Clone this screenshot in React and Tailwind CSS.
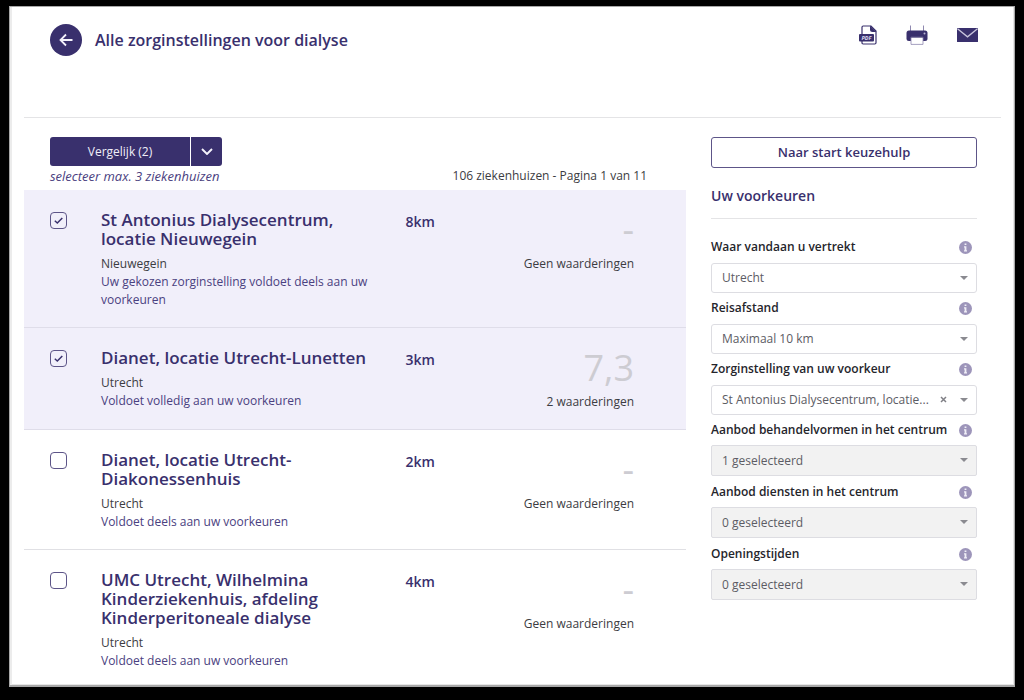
const institutions = [
  { name: 'St Antonius Dialysecentrum, locatie Nieuwegein', city: 'Nieuwegein', match: 'Uw gekozen zorginstelling voldoet deels aan uw voorkeuren', distance: '8km', score: null, reviews: 'Geen waarderingen', selected: true },
  { name: 'Dianet, locatie Utrecht-Lunetten', city: 'Utrecht', match: 'Voldoet volledig aan uw voorkeuren', distance: '3km', score: '7,3', reviews: '2 waarderingen', selected: true },
  { name: 'Dianet, locatie Utrecht-Diakonessenhuis', city: 'Utrecht', match: 'Voldoet deels aan uw voorkeuren', distance: '2km', score: null, reviews: 'Geen waarderingen', selected: false },
  { name: 'UMC Utrecht, Wilhelmina Kinderziekenhuis, afdeling Kinderperitoneale dialyse', city: 'Utrecht', match: 'Voldoet deels aan uw voorkeuren', distance: '4km', score: null, reviews: 'Geen waarderingen', selected: false },
];

const preferences = [
  { id: 'vertrek', label: 'Waar vandaan u vertrekt', value: 'Utrecht' },
  { id: 'afstand', label: 'Reisafstand', value: 'Maximaal 10 km' },
  { id: 'instelling', label: 'Zorginstelling van uw voorkeur', value: 'St Antonius Dialysecentrum, locatie...', clearable: true },
  { id: 'behandelvormen', label: 'Aanbod behandelvormen in het centrum', value: '1 geselecteerd', multi: true },
  { id: 'diensten', label: 'Aanbod diensten in het centrum', value: '0 geselecteerd', multi: true },
  { id: 'openingstijden', label: 'Openingstijden', value: '0 geselecteerd', multi: true },
];

function PdfIcon() {
  return (
    <svg className="h-5 w-[18px]" viewBox="0 0 18 20" fill="none">
      <path d="M3 9V2.2Q3 1 4.2 1H12L17 6V17.8Q17 19 15.8 19H4.2Q3 19 3 17.8V16" stroke="#39306d" strokeWidth="1.2" />
      <path d="M11 .6L17.4 7H13.5Q11 7 11 4.500Z" fill="#39306d" />
      <rect y="9" width="15" height="7.500" rx="1" fill="#39306d" />
      <text x="7.500" y="14.800" fontSize="5.500" fontWeight="700" fontStyle="italic" textAnchor="middle" fill="#dedaf0" fontFamily="Open Sans, sans-serif">PDF</text>
    </svg>
  );
}

function PrintIcon() {
  return (
    <svg className="h-5 w-[22px]" viewBox="0 0 22 20" fill="none">
      <path d="M4.500 6V.5M17.500 6V.5" stroke="#8f89b0" strokeWidth="1" />
      <path d="M3 5.500H19Q21.500 5.500 21.500 8V13.500Q21.500 16 19 16H3Q.5 16 .5 13.500V8Q.5 5.500 3 5.500Z" fill="#39306d" />
      <path d="M5 12H17V19.400H5Z" fill="#fff" stroke="#8f89b0" strokeWidth=".8" />
      <path d="M4.600 12H17.400" stroke="#39306d" strokeWidth="1" />
      <circle cx="18.500" cy="8.500" r="1" fill="#b9b4d2" />
    </svg>
  );
}

function MailIcon() {
  return (
    <svg className="h-[14px] w-[21px]" viewBox="0 0 21 14" fill="none">
      <rect width="21" height="14" rx=".5" fill="#39306d" />
      <path d="M.5 .8L10.500 8.800L20.500 .8" stroke="#c9c5dd" strokeWidth="1.300" />
    </svg>
  );
}

function InfoButton({ label }) {
  return (
    <button type="button" aria-label={`Uitleg over ${label}`} className="mr-[5px] shrink-0">
      <svg className="size-[13px]" viewBox="0 0 13 13">
        <circle cx="6.500" cy="6.500" r="6.500" fill="#9d95ba" />
        <path d="M5.600 2.500H7.400V4.100H5.600ZM5 5.200H7.400V9.300H8V10.500H5V9.300H5.600V6.400H5Z" fill="#f1eff7" />
      </svg>
    </button>
  );
}

function Preference({ id, label, value, clearable, multi }) {
  return (
    <div className={multi ? 'mb-[7px]' : 'mb-1.5'}>
      <div className={`flex h-[18px] items-center justify-between ${multi ? 'mb-1.5' : 'mb-[7px]'}`}>
        <label htmlFor={id} className="whitespace-nowrap text-[12px] font-semibold text-[#25252b]">{label}</label>
        <InfoButton label={label} />
      </div>
      <div className="relative">
        <select
          id={id}
          className={`block w-full appearance-none border border-[#dddde2] pl-[10px] pr-9 text-[12px] text-[#5c5c64] ${multi ? 'h-[31px] rounded-[2px] bg-[#f2f2f2]' : 'h-[30px] rounded-[3px] bg-white'}`}
        >
          <option>{value}</option>
        </select>
        {clearable && (
          <button type="button" aria-label="Wis keuze" className="absolute right-[30px] top-[11px] flex">
            <svg className="size-[7px]" viewBox="0 0 7 7">
              <path d="M1 1L6 6M6 1L1 6" stroke="#808086" strokeWidth="1.500" />
            </svg>
          </button>
        )}
        <svg className="pointer-events-none absolute right-[9px] top-[13px] h-1 w-2" viewBox="0 0 8 4">
          <path d="M0 0H8L4 4Z" fill="#8a8a90" />
        </svg>
      </div>
    </div>
  );
}

function Institution({ item, index }) {
  const id = `instelling-${index}`;
  return (
    <li className={`grid grid-cols-[51px_minmax(0,4fr)_minmax(0,3fr)] border-b pb-[18px] pl-[26px] pr-[52px] pt-5 last:border-b-0 last:pb-[15px] ${item.selected ? 'border-[#dfdde9] bg-[#f1effa]' : 'border-[#e0e0e4]'}`}>
      <div className="relative mt-0.5 size-[17px]">
        <input
          id={id}
          type="checkbox"
          defaultChecked={item.selected}
          className="peer block size-[17px] appearance-none rounded-[4px] border border-[#5d5588]"
        />
        <svg className="pointer-events-none absolute left-1 top-1 hidden size-[9px] peer-checked:block" viewBox="0 0 9 9" fill="none">
          <path d="M.8 4.800L3.300 7L8.300 2" stroke="#39306d" strokeWidth="1.500" />
        </svg>
      </div>
      <div className="pr-[30px]">
        <label htmlFor={id} className="mb-[7px] block text-[17px] font-semibold leading-[19px] text-[#39306d]">{item.name}</label>
        <p className="text-[12px] leading-[18px] text-[#3c3c42]">{item.city}</p>
        <p className="text-[12px] leading-[18px] text-[#4a4180]">{item.match}</p>
      </div>
      <div className="flex items-start justify-between">
        <span className="text-[14px] font-semibold leading-[23px] text-[#39306d]">{item.distance}</span>
        <div className="text-right">
          <p className="mb-[5px] text-[36px] leading-[40px] text-[#cdccd2]">{item.score ?? '-'}</p>
          <p className="text-[12px] leading-[18px] text-[#3c3c42]">{item.reviews}</p>
        </div>
      </div>
    </li>
  );
}

export default function App() {
  return (
    <div className="min-h-screen bg-black pb-[13px] pl-[9px] pr-[9px] pt-1.5 font-['Open_Sans',sans-serif]">
      <div className="border border-b-2 border-[#a8a8a8] bg-white shadow-[inset_2px_0_0_#ececec,inset_-1px_-1px_0_#e6e6e6]">
        <header className="ml-[14px] mr-[13px] flex h-[111px] items-start justify-between border-b border-[#e4e4e6] pl-[26px] pr-[23px]">
          <div className="flex items-center gap-[13px] pt-[17px]">
            <a href="#terug" aria-label="Terug" className="flex size-8 items-center justify-center rounded-full bg-[#39306d]">
              <svg className="size-[14px]" viewBox="0 0 14 14" fill="none">
                <path d="M13.500 7H1.500M7 1.500L1.500 7L7 12.500" stroke="#f4f2fb" strokeWidth="1.800" />
              </svg>
            </a>
            <h1 className="text-[16px] font-semibold text-[#39306d]">Alle zorginstellingen voor dialyse</h1>
          </div>
          <div className="flex items-center gap-[29px] pt-[18px]">
            <button type="button" aria-label="Opslaan als PDF"><PdfIcon /></button>
            <button type="button" aria-label="Afdrukken"><PrintIcon /></button>
            <button type="button" aria-label="E-mailen"><MailIcon /></button>
          </div>
        </header>

        <div className="ml-[14px] mr-[37px] grid grid-cols-[minmax(0,1fr)_266px] gap-[25px] pt-[19px]">
          <main>
            <div className="flex items-end justify-between pb-[5px] pl-[26px] pr-[39px]">
              <div>
                <div className="mb-px flex h-[29px] w-[172px] gap-px text-[12px] text-[#f0eef8]">
                  <button type="button" className="flex-1 rounded-l-[3px] bg-[#39306d]">Vergelijk (2)</button>
                  <button type="button" aria-label="Meer opties" className="flex w-[31px] items-center justify-center rounded-r-[3px] bg-[#39306d]">
                    <svg className="h-[7px] w-3" viewBox="0 0 12 7" fill="none">
                      <path d="M1 1L6 6L11 1" stroke="#f4f2fb" strokeWidth="1.900" />
                    </svg>
                  </button>
                </div>
                <p className="text-[13px] italic leading-[18px] text-[#4a4180]">selecteer max. 3 ziekenhuizen</p>
              </div>
              <p className="text-[12px] leading-[18px] text-[#3c3c42]">106 ziekenhuizen - Pagina 1 van 11</p>
            </div>
            <ul>
              {institutions.map((item, index) => (
                <Institution key={item.name} item={item} index={index} />
              ))}
            </ul>
          </main>

          <aside>
            <button type="button" className="block h-[31px] w-full rounded-[3px] border border-[#5d5588] text-[13px] font-semibold text-[#39306d]">Naar start keuzehulp</button>
            <h2 className="mb-[19px] border-b border-[#e4e4e6] pb-3 pt-[18px] text-[14px] font-semibold leading-5 text-[#39306d]">Uw voorkeuren</h2>
            {preferences.map((preference) => (
              <Preference key={preference.id} {...preference} />
            ))}
          </aside>
        </div>
      </div>
    </div>
  );
}
